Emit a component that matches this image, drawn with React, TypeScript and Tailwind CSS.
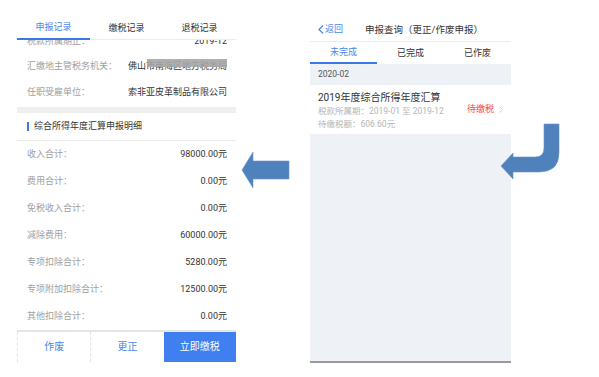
import React from "react";

const font = { fontFamily: 'Roboto, "Noto Sans CJK SC", "Noto Sans", sans-serif' };

function Row({ label, value }: { label: string; value: string }) {
  return (
    <div className="h-[27px] flex items-center justify-between pl-[10px] pr-[9px] text-[9px] leading-none">
      <span className="text-[#a0a0a0]">{label}</span>
      <span className="text-[#333]">{value}</span>
    </div>
  );
}

function LeftPanel() {
  return (
    <div className="ml-[17px] w-[219px] flex flex-col pt-[17px] bg-white">
      <div className="h-[23px] flex border-b border-[#ececec] text-[9px] leading-none">
        <div className="flex-1 flex items-center justify-center text-[#4a86ee] border-b-2 border-[#3a78e8] -mb-px">申报记录</div>
        <div className="flex-1 flex items-center justify-center text-[#333]">缴税记录</div>
        <div className="flex-1 flex items-center justify-center text-[#333]">退税记录</div>
      </div>
      <div className="h-[13px] overflow-hidden">
        <div className="-mt-[12px] h-[26px] flex items-center justify-between pl-[10px] pr-[9px] text-[9px] leading-none">
          <span className="text-[#a0a0a0]">税款所属期止：</span>
          <span className="text-[#333]">2019-12</span>
        </div>
      </div>
      <div className="h-[26px] flex items-center justify-between pl-[10px] pr-[9px] text-[9px] leading-none">
        <span className="text-[#a0a0a0]">汇缴地主管税务机关：</span>
        <span className="relative text-[#333]">
          佛山市南海区地方税务局
          <span className="absolute left-[19px] right-0 -top-[3px] h-[8px] bg-[#a6a6a6] opacity-90" />
        </span>
      </div>
      <div className="h-[26px] flex items-center justify-between pl-[10px] pr-[9px] text-[9px] leading-none">
        <span className="text-[#a0a0a0]">任职受雇单位：</span>
        <span className="text-[#333]">索非亚皮革制品有限公司</span>
      </div>
      <div className="h-[2px]" />
      <div className="h-[6px] bg-[#efefef]" />
      <div className="h-[28px] flex items-center pl-[10px] border-b border-[#ececec] text-[9px] leading-none text-[#333]">
        <span className="w-[2px] h-[9px] bg-[#3a78e8] mr-[5px]" />
        综合所得年度汇算申报明细
      </div>
      <Row label="收入合计：" value="98000.00元" />
      <Row label="费用合计：" value="0.00元" />
      <Row label="免税收入合计：" value="0.00元" />
      <Row label="减除费用：" value="60000.00元" />
      <Row label="专项扣除合计：" value="5280.00元" />
      <Row label="专项附加扣除合计：" value="12500.00元" />
      <Row label="其他扣除合计：" value="0.00元" />
      <div className="border-t-2 border-[#e6e6e6] h-[32px] flex text-[10px] leading-none">
        <div className="flex-1 flex items-center justify-center text-[#4a86ee] border-l border-dashed border-[#e2e2e2]">作废</div>
        <div className="flex-1 flex items-center justify-center text-[#4a86ee] border-l border-dashed border-[#e2e2e2]">更正</div>
        <div className="flex-1 flex items-center justify-center text-white bg-[#3f7ff0]">立即缴税</div>
      </div>
    </div>
  );
}

function RightPanel() {
  return (
    <div className="w-[201px] h-[363px] flex flex-col pt-[18px]">
      <div className="h-[24px] flex items-center border-b border-[#ececec] text-[9px] leading-none">
        <span className="ml-[8px] text-[#4a86ee] flex items-center">
          <svg width="6" height="9" viewBox="0 0 6 9" className="mr-[1px]">
            <path d="M5 0.5 L1 4.5 L5 8.5" fill="none" stroke="#4a86ee" strokeWidth="1.2" />
          </svg>
          返回
        </span>
        <span className="ml-[22px] text-[9.5px] text-[#333]">申报查询（更正/作废申报）</span>
      </div>
      <div className="h-[22px] flex text-[9px] leading-none">
        <div className="flex-1 flex items-center justify-center text-[#4a86ee] border-b-2 border-[#3a78e8]">未完成</div>
        <div className="flex-1 flex items-center justify-center text-[#333]">已完成</div>
        <div className="flex-1 flex items-center justify-center text-[#333]">已作废</div>
      </div>
      <div className="h-[21px] flex items-center pl-[8px] bg-[#eef1f5] text-[8.5px] leading-none text-[#555]">2020-02</div>
      <div className="h-[49px] flex items-center bg-white pl-[8px] pr-[8px]">
        <div className="flex-1 flex flex-col pt-[2px]">
          <span className="text-[10px] leading-none text-[#333]">2019年度综合所得年度汇算</span>
          <span className="mt-[4.5px] text-[8.5px] leading-none text-[#b5b5b5]">税款所属期：2019-01 至 2019-12</span>
          <span className="mt-[4px] text-[8.5px] leading-none text-[#b5b5b5]">待缴税额：606.60元</span>
        </div>
        <span className="text-[9px] leading-none text-[#f24a4a] mr-[5px]">待缴税</span>
        <svg width="4" height="7" viewBox="0 0 4 7">
          <path d="M0.5 0.5 L3.5 3.5 L0.5 6.5" fill="none" stroke="#c8c8c8" strokeWidth="0.9" />
        </svg>
      </div>
      <div className="flex-1 bg-[#eef1f5] border-b-2 border-[#9a9a9a]" />
    </div>
  );
}

export default function App() {
  return (
    <div className="relative w-[599px] h-[377px] bg-white flex overflow-hidden" style={font}>
      <LeftPanel />
      <div className="w-[74px] shrink-0">
        <svg width="74" height="377" viewBox="0 0 74 377">
          <polygon points="6,170 17,152 17,161 53,161 53,179 17,179 17,188" fill="#4f81bd" stroke="#6b95c9" strokeWidth="0.6" />
        </svg>
      </div>
      <RightPanel />
      <svg className="absolute left-[495px] top-[120px]" width="70" height="65" viewBox="0 0 70 65">
        <path d="M6 46 L18 33 L18 37 L40 37 Q49 37 49 28 L49 4 L64 4 L64 33 Q64 52 44 52 L18 52 L18 59 Z" fill="#4f81bd" stroke="#6b95c9" strokeWidth="0.6" />
      </svg>
    </div>
  );
}
